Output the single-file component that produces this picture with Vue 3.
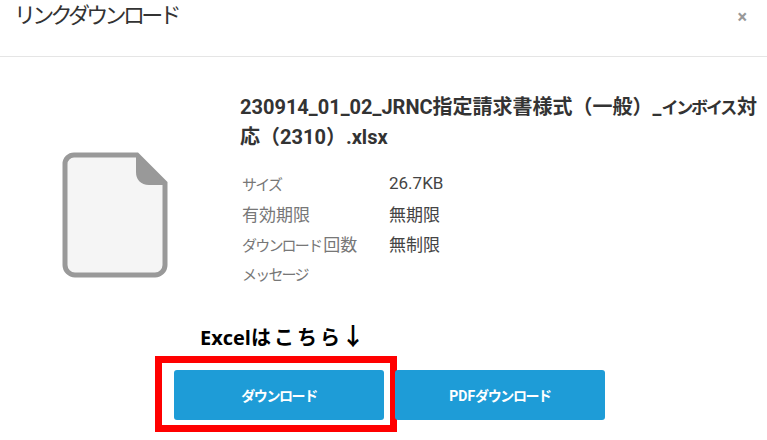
<script setup>
</script>

<template>
  <div class="dialog">
    <header class="dialog-header">
      <h1 class="dialog-title">リンクダウンロード</h1>
      <span class="dialog-close">×</span>
    </header>

    <div class="dialog-body">
      <div class="file-icon">
        <svg width="106" height="126" viewBox="0 0 106 126">
          <path
            d="M12 3H75L103 31V113a10 10 0 0 1-10 10H13a10 10 0 0 1-10-10V12a9 9 0 0 1 9-9Z"
            fill="#f5f5f5"
            stroke="#999"
            stroke-width="5"
          />
          <path
            d="M75 3L103 31V32H87C79 32 75 27 75 20Z"
            fill="#999"
            stroke="#999"
            stroke-width="2"
            stroke-linejoin="round"
          />
        </svg>
      </div>

      <div class="file-info">
        <div class="file-name">230914_01_02_JRNC指定請求書様式（一般）_<span class="kana">インボイス</span>対<br>応（2310）.xlsx</div>
        <dl class="file-details">
          <div class="detail-row">
            <dt><span class="kana">サイズ</span></dt>
            <dd>26.7KB</dd>
          </div>
          <div class="detail-row">
            <dt>有効期限</dt>
            <dd>無期限</dd>
          </div>
          <div class="detail-row">
            <dt><span class="kana">ダウンロード</span>回数</dt>
            <dd>無制限</dd>
          </div>
          <div class="detail-row">
            <dt><span class="kana">メッセージ</span></dt>
            <dd></dd>
          </div>
        </dl>
      </div>
    </div>

    <div class="note">Excel<span class="note-kana">はこちら</span><span class="note-arrow">↓</span></div>

    <div class="actions">
      <button class="action-button" type="button">
        <span class="kana">ダウンロード</span>
        <span class="highlight"></span>
      </button>
      <button class="action-button" type="button">PDF<span class="kana">ダウンロード</span></button>
    </div>
  </div>
</template>

<style>
html,
body {
  margin: 0;
  background: #fff;
}
</style>

<style scoped>
.dialog {
  width: 767px;
  height: 440px;
  overflow: hidden;
  background: #fff;
  font-family: Roboto, "Noto Sans CJK JP", sans-serif;
  color: #333;
}

.dialog-header {
  height: 57px;
  box-sizing: border-box;
  display: flex;
  justify-content: space-between;
  padding: 3px 20px 0 14px;
  border-bottom: 1px solid #e5e5e5;
}

.dialog-title {
  margin: 0;
  font-size: 22px;
  line-height: 26px;
  font-weight: 400;
  letter-spacing: -3.7px;
  color: #333;
}

.dialog-close {
  padding-top: 2px;
  font-size: 18px;
  line-height: 24px;
  font-weight: 700;
  color: #999;
}

.dialog-body {
  display: flex;
  padding-top: 35px;
}

.file-icon {
  width: 240px;
  box-sizing: border-box;
  padding: 60px 0 0 62px;
}

.file-name {
  width: 522px;
  font-size: 20px;
  line-height: 30px;
  font-weight: 700;
  color: #333;
}

.file-name .kana {
  font-size: 17px;
  line-height: 1;
  letter-spacing: -2.2px;
  margin-right: 2px;
}

.file-details {
  margin: 16px 0 0;
  font-size: 17px;
}

.detail-row {
  display: flex;
  height: 30px;
  align-items: center;
}

.detail-row dt {
  width: 147px;
  padding-left: 2px;
  color: #777;
}

.detail-row dt .kana {
  font-size: 15px;
  letter-spacing: -1.8px;
  margin-right: 2px;
}

.detail-row dd {
  margin: 0;
  color: #444;
}

.note {
  margin: 37px 0 0 200px;
  font-family: "Open Sans", "Noto Sans CJK JP", sans-serif;
  font-size: 20px;
  line-height: 26px;
  font-weight: 700;
  color: #000;
}

.note-kana {
  letter-spacing: 3px;
}

.note-arrow {
  font-size: 24px;
  line-height: 20px;
  margin-left: -2px;
}

.actions {
  display: flex;
  gap: 11px;
  margin: 19px 0 0 174px;
}

.action-button {
  position: relative;
  width: 210px;
  height: 50px;
  padding: 0;
  border: none;
  border-radius: 3px;
  background: #1e9cd7;
  color: #fff;
  font-family: inherit;
  font-size: 14px;
  font-weight: 700;
}

.action-button .kana {
  letter-spacing: -1.4px;
}

/* annotation drawn on top of the screenshot */
.highlight {
  position: absolute;
  left: -19px;
  top: -14px;
  width: 228px;
  height: 62px;
  border: 7px solid #f00;
}
</style>
